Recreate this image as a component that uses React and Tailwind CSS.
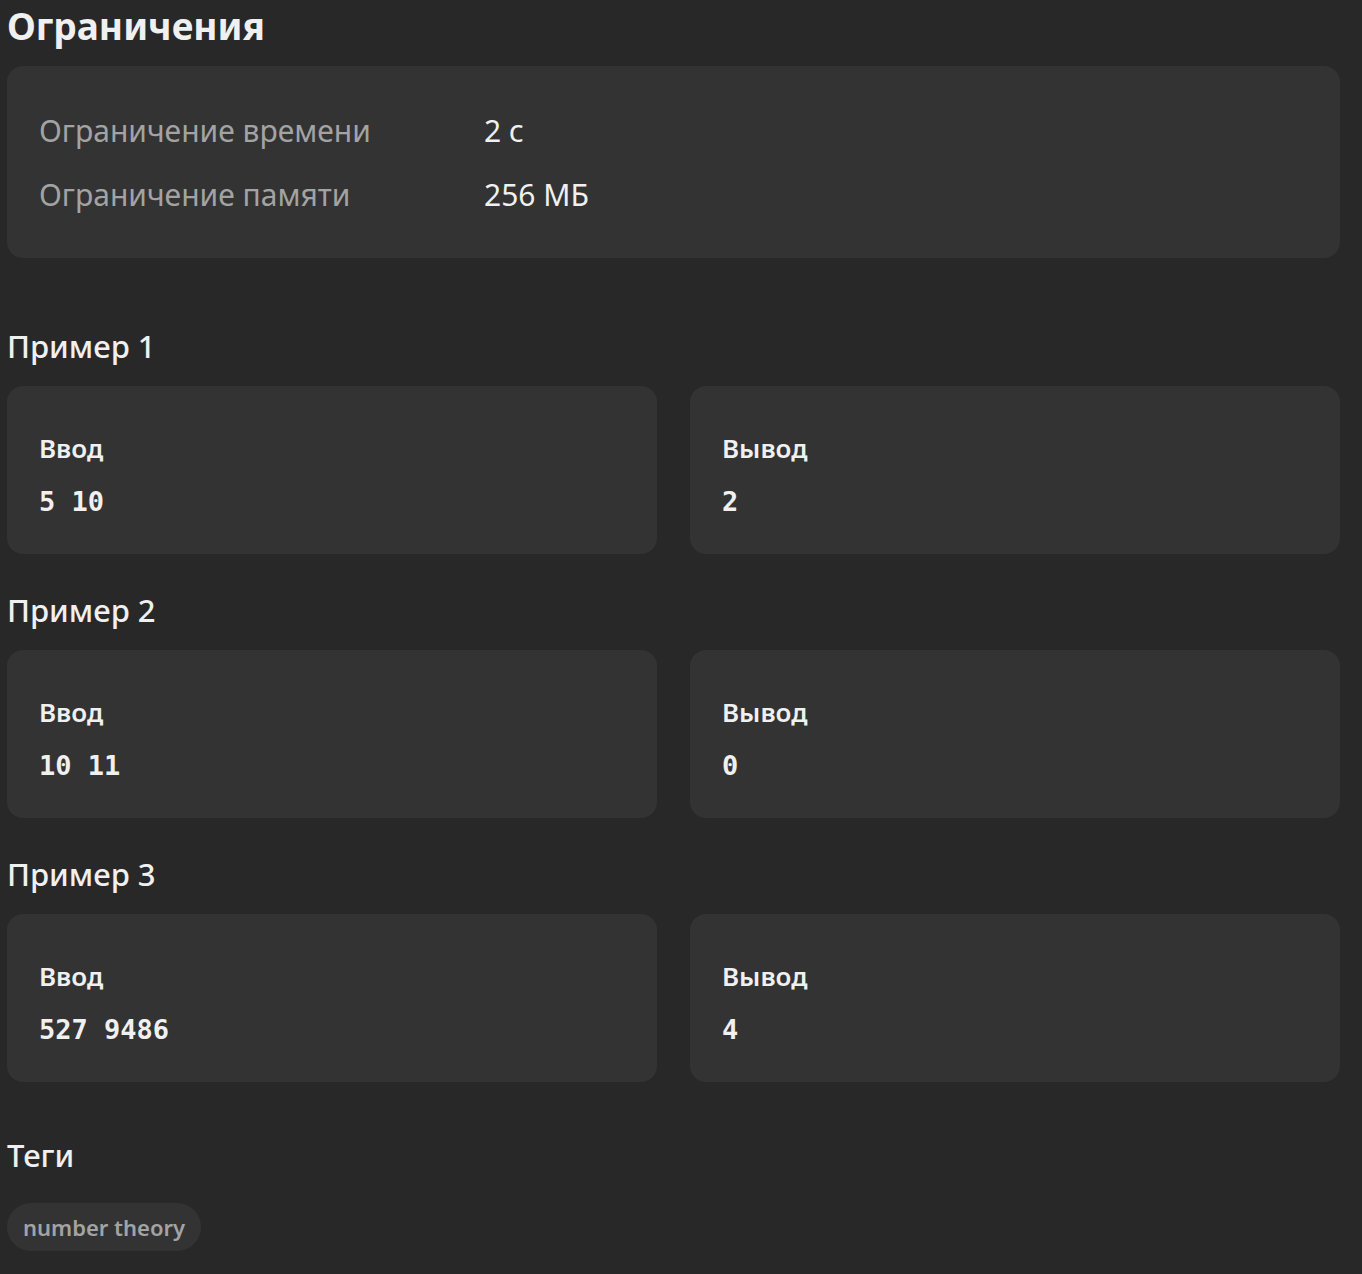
export default function App() {
  const examples = [
    { n: 1, input: "5 10", output: "2" },
    { n: 2, input: "10 11", output: "0" },
    { n: 3, input: "527 9486", output: "4" },
  ];

  return (
    <div className="min-h-[1274px] bg-[#282828] font-['Noto_Sans',sans-serif] text-[#f0f0f0]">
      <div className="ml-[7px] w-[1333px] pt-[2px]">
        {/* Constraints */}
        <h2 className="text-[37px] font-bold leading-[48px]">Ограничения</h2>
        <div className="mt-[16px] h-[192px] rounded-[16px] bg-[#333333] px-[32px] pt-[32px]">
          <div className="flex h-[64px] items-center text-[30px]">
            <span className="w-[445px] text-[#a3a3a3]">Ограничение времени</span>
            <span>2 с</span>
          </div>
          <div className="flex h-[64px] items-center text-[30px]">
            <span className="w-[445px] text-[#a3a3a3]">Ограничение памяти</span>
            <span>256 МБ</span>
          </div>
        </div>

        {/* Examples */}
        <div className="mt-[68px] flex flex-col gap-[36px]">
          {examples.map((ex) => (
            <div key={ex.n}>
              <h3 className="text-[31px] font-medium leading-[40px]">Пример {ex.n}</h3>
              <div className="mt-[20px] grid grid-cols-2 gap-[33px]">
                {[
                  ["Ввод", ex.input],
                  ["Вывод", ex.output],
                ].map(([label, value]) => (
                  <div key={label} className="h-[168px] rounded-[16px] bg-[#333333] px-[32px] pt-[44px]">
                    <div className="text-[26px] font-semibold leading-[36px]">{label}</div>
                    <div className="mt-[18px] font-['DejaVu_Sans_Mono',monospace] text-[27px] font-bold leading-[36px]">
                      {value}
                    </div>
                  </div>
                ))}
              </div>
            </div>
          ))}
        </div>

        {/* Tags */}
        <h3 className="mt-[53px] text-[31px] font-medium leading-[40px]">Теги</h3>
        <div className="mt-[28px] flex">
          <span className="rounded-full bg-[#333333] px-[16px] py-[8px] text-[22px] font-semibold leading-[32px] text-[#a3a3a3]">
            number theory
          </span>
        </div>
      </div>
    </div>
  );
}
